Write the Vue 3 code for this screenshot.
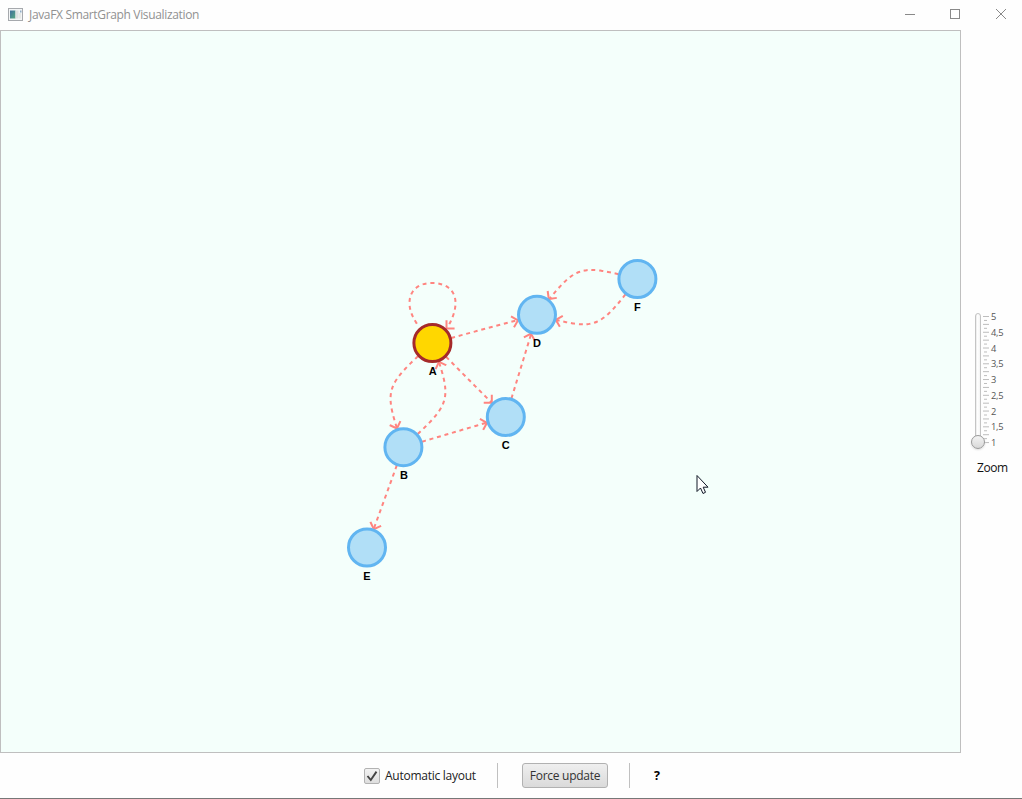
<script setup>
const nodes = [
  { id: 'A', x: 432.4, y: 343, lx: 432.8, selected: true },
  { id: 'B', x: 403.4, y: 447.2, lx: 404 },
  { id: 'C', x: 505.8, y: 417, lx: 505.7 },
  { id: 'D', x: 537, y: 314.8, lx: 537 },
  { id: 'E', x: 367, y: 547.5, lx: 367 },
  { id: 'F', x: 637.4, y: 279, lx: 637.4 },
]
const edges = [
  'M432.4 343L537 314.8',
  'M432.4 343L505.8 417',
  'M403.4 447.2L505.8 417',
  'M505.8 417L537 314.8',
  'M403.4 447.2L367 547.5',
  'M432.4 343C383 388 383 388 403.4 447.2',
  'M403.4 447.2C453 402 453 402 432.4 343',
  'M637.4 279C577 263.5 577 263.5 537 314.8',
  'M637.4 279C597.5 331 597.5 331 537 314.8',
  'M419 327C413 318 409.5 311 409.500 303C409.500 290 419 283 432 283C446 283 455.500 290 455.500 303C455.500 311 452 320 447 328',
]
const arrows = [
  [518, 320.3, -15], [491.8, 402.8, 45], [487, 422.8, -16.5], [531, 333.6, -73],
  [373.8, 529.2, 110], [397, 428.5, 70], [439, 361.8, -110], [548.8, 299, 127],
  [555.8, 319.8, 195], [446.5, 328.4, 135],
]
const labels = ['5', '4,5', '4', '3,5', '3', '2,5', '2', '1,5', '1']
const ticks = Array.from({ length: 33 }, (_, i) => ({
  y: 3.5 + i * 3.94,
  x: i % 2 ? 1 : 0,
  w: i % 2 ? 3 : 6,
}))
</script>

<template>
  <div class="window">
    <header class="titlebar">
      <svg class="app-icon" width="15" height="13" viewBox="0 0 15 13">
        <defs>
          <linearGradient id="ic" x1="0" y1="0" x2="1" y2="1">
            <stop offset="0" stop-color="#3f6f9d" /><stop offset="1" stop-color="#58aa82" />
          </linearGradient>
        </defs>
        <rect x=".5" y=".5" width="14" height="12" fill="#f3f5f6" stroke="#a6a9ad" />
        <rect x="2" y="2.500" width="5.500" height="8" fill="url(#ic)" />
        <rect x="7.500" y="2.500" width="3" height="8" fill="#dde1e2" />
        <rect x="12" y="2.500" width="1.500" height="2" fill="#8fadc8" />
        <rect x="11" y="5" width="2" height="5.500" fill="#e5e8e6" />
      </svg>
      <span class="title">JavaFX SmartGraph Visualization</span>
      <svg class="controls" width="104" height="12" viewBox="0 0 104 12" fill="none" stroke="#898989">
        <path d="M0 6.500H10" />
        <rect x="45.500" y="1.500" width="9" height="9" />
        <path d="M91 1L101 11M101 1L91 11" />
      </svg>
    </header>
    <main class="body">
      <section class="graph">
        <svg width="959" height="721" viewBox="1 31 959 721">
          <g class="edges"><path v-for="d in edges" :key="d" :d="d" /></g>
          <g class="arrows">
            <path v-for="(a, i) in arrows" :key="i" d="M0 0L-5 5M0 0L-5 -5" :transform="`translate(${a[0]} ${a[1]}) rotate(${a[2]})`" />
          </g>
          <circle v-for="n in nodes" :key="n.id" :cx="n.x" :cy="n.y" r="18.500" :class="['node', { selected: n.selected }]" />
          <text v-for="n in nodes" :key="n.id" class="node-label" :x="n.lx" :y="Math.round(n.y + 32)">{{ n.id }}</text>
          <path class="cursor" d="M697 475.500V491.500L700.500 488L703 493.500L705.500 492.300L703.200 487.200H708Z" />
        </svg>
      </section>
      <aside class="zoom">
        <div class="slider">
          <div class="track"><span class="thumb"></span></div>
          <svg class="ticks" width="6" height="134" viewBox="0 0 6 134">
            <rect v-for="t in ticks" :key="t.y" :x="t.x" :y="t.y - 0.5" :width="t.w" height="1" fill="#bdbdbd" />
          </svg>
          <div class="scale"><span v-for="l in labels" :key="l">{{ l }}</span></div>
        </div>
        <span class="zoom-label">Zoom</span>
      </aside>
    </main>
    <footer class="toolbar">
      <span class="check">
        <svg width="14" height="14" viewBox="0 0 14 14"><path d="M2.500 7L5.800 11L11.500 2.600" fill="none" stroke="#444" stroke-width="1.900" /></svg>
      </span>
      <span class="check-label">Automatic layout</span>
      <i class="sep first"></i>
      <button class="force">Force update</button>
      <i class="sep second"></i>
      <b class="help">?</b>
    </footer>
  </div>
</template>

<style>
body { margin: 0; overflow: hidden; }
</style>
<style scoped>
.window { box-sizing: border-box; width: 1022px; height: 799px; display: flex; flex-direction: column; background: #fefefe; border-bottom: 1px solid #777; font-family: "Open Sans", "Noto Sans", sans-serif; font-size: 12px; color: #222; }
.titlebar { height: 30px; box-sizing: border-box; display: flex; align-items: center; padding: 0 13px 2px 8px; }
.app-icon { flex: none; }
.title { margin-left: 6px; color: #919191; line-height: 20px; position: relative; top: 1px; letter-spacing: -0.340px; white-space: nowrap; }
.controls { margin-left: auto; }
.body { height: 723px; display: flex; }
.graph { width: 959px; height: 721px; border: 1px solid #bfbfbf; background: #f4fffb; flex: none; }
.graph svg { display: block; }
.edges path { fill: none; stroke: #ff8580; stroke-width: 2; stroke-dasharray: 2 5.800; stroke-dashoffset: 3; stroke-linecap: square; }
.arrows path { fill: none; stroke: #ff8580; stroke-width: 2; stroke-linecap: square; }
.node { fill: #b1dff7; stroke: #61b5f1; stroke-width: 3; }
.node.selected { fill: #ffd700; stroke: #a52a2a; }
.node-label { font: bold 11px "Liberation Sans", Arial, sans-serif; text-anchor: middle; fill: #000; }
.cursor { fill: #fff; stroke: #111827; stroke-width: 1; }
.zoom { flex: 1; padding-top: 283px; }
.slider { display: flex; height: 136px; padding-left: 14px; }
.track { box-sizing: border-box; width: 6px; height: 134px; border: 1px solid #c4c4c4; border-radius: 3px; background: linear-gradient(90deg, #e8e8e8, #fff 40%, #f4f4f4); position: relative; }
.thumb { position: absolute; box-sizing: border-box; left: -5px; top: 121px; width: 14px; height: 14px; border-radius: 50%; border: 1px solid #999; background: linear-gradient(#f4f4f4, #d8d8d8); box-shadow: 0 1px 2px #ddd; }
.ticks { margin-left: 2px; }
.scale { margin: -4px 0 0 2px; display: flex; flex-direction: column; font-size: 9.300px; line-height: 15.750px; color: #555; letter-spacing: -0.200px; }
.zoom-label { display: block; margin: 10px 0 0 16px; line-height: 18px; color: #111; letter-spacing: -0.400px; }
.toolbar { flex: 1; display: flex; align-items: center; padding-left: 364px; }
.check { box-sizing: border-box; width: 16px; height: 16px; border: 1px solid #b2b2b2; border-radius: 2px; background: linear-gradient(#f3f3f3, #dedede); }
.check svg { display: block; }
.check-label { width: 112px; margin-left: 5px; letter-spacing: -0.260px; white-space: nowrap; }
.sep { width: 1px; height: 25px; background: #c0c0c0; }
.sep.second { margin-left: 21px; }
.force { box-sizing: border-box; width: 86px; height: 25px; margin-left: 24px; padding: 0; border: 1px solid #b1b1b1; border-radius: 3px; background: linear-gradient(#efefef, #dadada); color: #333; font: inherit; letter-spacing: -0.280px; white-space: nowrap; }
.help { margin-left: 24px; color: #000; font-size: 12.500px; }
</style>
